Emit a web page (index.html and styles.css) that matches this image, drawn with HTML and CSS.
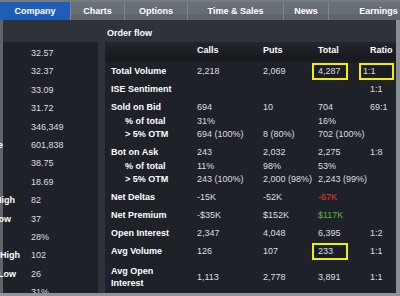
FILE: index.html
```html
<!DOCTYPE html>
<html>
<head>
<meta charset="utf-8">
<link rel="stylesheet" href="styles.css">
</head>
<body>
<div class="tabs">
  <div class="tab active w70">Company</div>
  <div class="tab w54">Charts</div>
  <div class="tab w63">Options</div>
  <div class="tab w96">Time &amp; Sales</div>
  <div class="tab w45">News</div>
  <div class="tab w100">Earnings</div>
</div>
<div class="main">
  <div class="left">
    <div class="left-panel">
      <div class="lrow"><span class="lbl"></span><span>32.57</span></div>
      <div class="lrow"><span class="lbl"></span><span>32.37</span></div>
      <div class="lrow"><span class="lbl"></span><span>33.09</span></div>
      <div class="lrow"><span class="lbl"></span><span>31.72</span></div>
      <div class="lrow"><span class="lbl"></span><span>346,349</span></div>
      <div class="lrow"><span class="lbl cut-a">Avg Volume</span><span>601,838</span></div>
      <div class="lrow"><span class="lbl"></span><span>38.75</span></div>
      <div class="lrow"><span class="lbl"></span><span>18.69</span></div>
      <div class="lrow"><span class="lbl cut-b">52 Wk High</span><span>82</span></div>
      <div class="lrow"><span class="lbl cut-c">52 Wk Low</span><span>37</span></div>
      <div class="lrow"><span class="lbl"></span><span>28%</span></div>
      <div class="lrow"><span class="lbl cut-d">High</span><span>102</span></div>
      <div class="lrow"><span class="lbl cut-e">Low</span><span>26</span></div>
      <div class="lrow"><span class="lbl"></span><span>31%</span></div>
    </div>
  </div>
  <div class="right">
    <div class="title">Order flow</div>
    <div class="panel">
      <div class="row head"><span></span><span>Calls</span><span>Puts</span><span>Total</span><span>Ratio</span></div>
      <div class="row"><span class="lab">Total Volume</span><span>2,218</span><span>2,069</span><span><span class="box box-total">4,287</span></span><span><span class="box box-ratio">1:1</span></span></div>
      <div class="row"><span class="lab">ISE Sentiment</span><span></span><span></span><span></span><span>1:1</span></div>
      <div class="group">
        <div class="row"><span class="lab">Sold on Bid</span><span>694</span><span>10</span><span>704</span><span>69:1</span></div>
        <div class="row"><span class="lab sub">% of total</span><span>31%</span><span></span><span>16%</span><span></span></div>
        <div class="row"><span class="lab sub">&gt; 5% OTM</span><span>694 (100%)</span><span>8 (80%)</span><span>702 (100%)</span><span></span></div>
      </div>
      <div class="group">
        <div class="row"><span class="lab">Bot on Ask</span><span>243</span><span>2,032</span><span>2,275</span><span>1:8</span></div>
        <div class="row"><span class="lab sub">% of total</span><span>11%</span><span>98%</span><span>53%</span><span></span></div>
        <div class="row"><span class="lab sub">&gt; 5% OTM</span><span>243 (100%)</span><span>2,000 (98%)</span><span>2,243 (99%)</span><span></span></div>
      </div>
      <div class="row"><span class="lab">Net Deltas</span><span>-15K</span><span>-52K</span><span class="neg">-67K</span><span></span></div>
      <div class="row"><span class="lab">Net Premium</span><span>-$35K</span><span>$152K</span><span class="pos">$117K</span><span></span></div>
      <div class="row"><span class="lab">Open Interest</span><span>2,347</span><span>4,048</span><span>6,395</span><span>1:2</span></div>
      <div class="row"><span class="lab">Avg Volume</span><span>126</span><span>107</span><span><span class="box box-total">233</span></span><span>1:1</span></div>
      <div class="row tall"><span class="lab two">Avg Open<br>Interest</span><span>1,113</span><span>2,778</span><span>3,891</span><span>1:1</span></div>
    </div>
  </div>
</div>
</body>
</html>
```
FILE: styles.css
```css
* { box-sizing: border-box; margin: 0; padding: 0; }
html, body { width: 400px; height: 296px; overflow: hidden; }
body {
  background: #2e333a;
  font-family: "Liberation Sans", Arial, sans-serif;
  font-size: 9px;
  color: #dcdfe3;
}

.tabs {
  display: flex;
  height: 20px;
  padding-top: 2px;
  background: #767b82;
  overflow: hidden;
}
.tab {
  flex: none;
  display: flex;
  align-items: center;
  justify-content: center;
  font-weight: bold;
  color: #fff;
  background: linear-gradient(#6b7179 0, #666c74 11px, #737980 11px, #5f666e 12px, #5c636b 100%);
  border-left: 1px solid #80868d;
}
.tab.active { background: #1f5eb8; border-left: none; }
.w70 { width: 70px; }
.w54 { width: 54px; }
.w63 { width: 63px; }
.w96 { width: 96px; }
.w45 { width: 45px; }
.w100 { width: 100px; }

.main {
  display: flex;
  gap: 7px;
  height: 276px;
  border-bottom: 3px solid #8e9399;
  border-right: 4px solid #8a8f95;
}

.left {
  width: 98px;
  flex: none;
  padding-top: 22px;
  display: flex;
  flex-direction: column;
  background: linear-gradient(90deg, #60656c 0 3px, transparent 3px);
}
.left-panel {
  flex: 1;
  overflow: hidden;
  padding-top: 2px;
  background: linear-gradient(90deg, #60656c 0 3px, #1e2128 3px);
}
.lrow {
  display: grid;
  grid-template-columns: 28px 1fr;
  column-gap: 3px;
  height: 18.4px;
  line-height: 18.4px;
  color: #dcdfe3;
}
.lbl {
  display: flex;
  justify-content: flex-end;
  white-space: nowrap;
  font-weight: bold;
  color: #fff;
}
.cut-a { padding-right: 25px; }
.cut-b { padding-right: 13px; }
.cut-c { padding-right: 17px; }
.cut-d { padding-right: 8px; }
.cut-e { padding-right: 12px; }

.right {
  flex: 1;
  display: flex;
  flex-direction: column;
}
.title {
  height: 22px;
  padding: 4px 0 0 2px;
  line-height: 18px;
  font-weight: bold;
  color: #fff;
}
.panel {
  flex: 1;
  background: linear-gradient(#23272d 0, #17191e 17px, #1e2128 21px);
}

.row {
  display: grid;
  grid-template-columns: 86px 66px 55px 52px 1fr;
  padding-left: 6px;
  height: 18px;
  white-space: nowrap;
}
.row > span { display: flex; align-items: center; }
.row.head { height: 20px; padding-bottom: 4px; font-weight: bold; color: #fff; }
.group { padding: 2.25px 0; }
.group .row { height: 13.5px; }
.row.tall { height: 30px; padding-top: 3px; }
.row.tall > span { padding-top: 1px; }
.lab { font-weight: bold; color: #fff; }
.lab.sub { padding-left: 14px; }
.lab.two { line-height: 12px; }

.neg { color: #e63b30; }
.pos { color: #63b547; }

.box {
  display: flex;
  align-items: center;
  height: 17px;
  border: 2px solid #f3ef00;
  background: #1a1d24;
}
.box-total { width: 36px; margin-left: -6px; padding-left: 4px; }
.box-ratio { width: 35px; margin-left: -11px; padding-left: 2px; }
```
